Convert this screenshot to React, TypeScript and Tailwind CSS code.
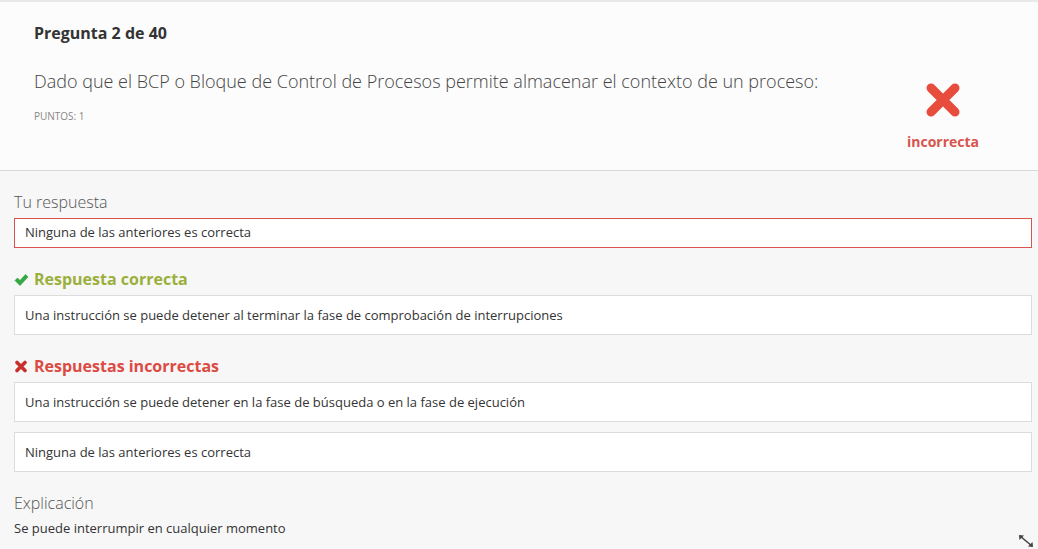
function AnswerBox({ text, tone = "plain" }: { text: string; tone?: "plain" | "wrong" }) {
    return (
        <div
            className={
                tone === "wrong"
                    ? "h-[30px] flex items-center px-[10px] bg-white border border-[#d9534f] text-[13px] text-[#333]"
                    : "h-[40px] flex items-center px-[10px] pt-[1px] bg-white border border-[#dcdcdc] text-[13px] text-[#333]"
            }
        >
            {text}
        </div>
    )
}

// thick rounded X like the font-icon one
function BigCross() {
    return (
        <svg width="36" height="34" viewBox="0 0 36 34">
            <path d="M6 5 L30 29 M30 5 L6 29" stroke="#e74c3c" strokeWidth="9" strokeLinecap="round" />
        </svg>
    )
}

function SmallCheck() {
    return (
        <svg width="15" height="13" viewBox="0 0 15 13">
            <path d="M1 7.5 L3.5 5 L6 7.5 L11.5 1.5 L14 4 L6 12.5 Z" fill="#33a843" stroke="#2b9a3a" strokeWidth="0.6" strokeLinejoin="round" />
        </svg>
    )
}

function SmallCross() {
    return (
        <svg width="14" height="13" viewBox="0 0 14 13">
            <path d="M3 2.5 L11 10.5 M11 2.5 L3 10.5" stroke="#c9302c" strokeWidth="3.6" strokeLinecap="round" />
        </svg>
    )
}

export default function App() {
    return (
        <div className="w-[1038px] h-[549px] overflow-hidden bg-[#f7f7f7] relative" style={{ fontFamily: '"Open Sans", sans-serif' }}>
            <div className="h-[2px] bg-[#e9e9e9]" />
            {/* header */}
            <div className="h-[169px] bg-[#fcfcfc] border-b border-[#d8d8d8] flex">
                <div className="flex-1 pl-[34px] pt-[20px]">
                    <div className="text-[16px] font-bold text-[#333] leading-[22px]">Pregunta 2 de 40</div>
                    <div className="mt-[25px] text-[18px] font-light text-[#444] leading-[24px]">
                        Dado que el BCP o Bloque de Control de Procesos permite almacenar el contexto de un proceso:
                    </div>
                    <div className="mt-[16px] text-[10px] text-[#888] leading-[14px]">PUNTOS: 1</div>
                </div>
                <div className="w-[190px] flex flex-col items-center pt-[81px]">
                    <BigCross />
                    <div className="mt-[16px] text-[14px] font-bold text-[#d9534f] leading-[18px]">incorrecta</div>
                </div>
            </div>
            {/* answers */}
            <div className="pl-[14px] pr-[6px]">
                <div className="mt-[20px] text-[16px] font-light text-[#555] leading-[22px]">Tu respuesta</div>
                <div className="mt-[5px]">
                    <AnswerBox text="Ninguna de las anteriores es correcta" tone="wrong" />
                </div>

                <div className="mt-[20px] flex items-center gap-[5px] text-[16px] font-bold text-[#9bb03c] leading-[22px]">
                    <SmallCheck />
                    Respuesta correcta
                </div>
                <div className="mt-[5px]">
                    <AnswerBox text="Una instrucción se puede detener al terminar la fase de comprobación de interrupciones" />
                </div>

                <div className="mt-[20px] flex items-center gap-[6px] text-[16px] font-bold text-[#dc4b43] leading-[22px]">
                    <SmallCross />
                    Respuestas incorrectas
                </div>
                <div className="mt-[5px] flex flex-col gap-[10px]">
                    <AnswerBox text="Una instrucción se puede detener en la fase de búsqueda o en la fase de ejecución" />
                    <AnswerBox text="Ninguna de las anteriores es correcta" />
                </div>

                <div className="mt-[20px] text-[16px] font-light text-[#555] leading-[22px]">Explicación</div>
                <div className="mt-[5px] text-[13px] text-[#333] leading-[18px]">Se puede interrumpir en cualquier momento</div>
            </div>
            <svg className="absolute right-[4px] bottom-[1px]" width="16" height="14" viewBox="0 0 16 14">
                <path d="M2 2 L14 12" stroke="#444" strokeWidth="1.6" />
                <path d="M1 1 L6 1.5 L1.5 6 Z" fill="#444" />
                <path d="M15 13 L10 12.5 L14.5 8 Z" fill="#444" />
            </svg>
        </div>
    )
}
